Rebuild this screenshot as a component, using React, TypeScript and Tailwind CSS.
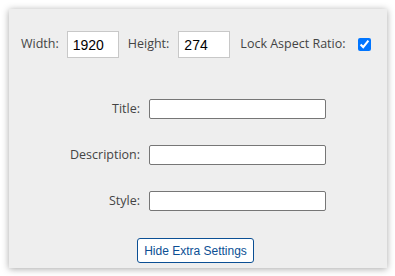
import { useState } from "react";

const labelFont = "font-['Open_Sans',_'Noto_Sans',_sans-serif]";
const inputFont = "font-['Liberation_Sans',_Arial,_sans-serif]";

function FieldRow({ label }: { label: string }) {
  return (
    <>
      <label className={`${labelFont} text-[12.5px] text-[#444] text-right leading-none`}>
        {label}
      </label>
      <input
        type="text"
        className="w-[177px] h-[20px] bg-white border border-[#767676] rounded-[2px] px-1 text-[13px] outline-none"
      />
    </>
  );
}

export default function App() {
  const [width, setWidth] = useState("1920");
  const [height, setHeight] = useState("274");
  const [locked, setLocked] = useState(true);

  return (
    <div className="w-[395px] h-[276px] bg-white pt-[9px] pl-[9px]">
      <div className="w-[378px] h-[259px] bg-[#eeeeee] shadow-[0_1px_7px_rgba(0,0,0,0.35)] flex flex-col">
        {/* Size row */}
        <div className={`${labelFont} flex items-center pt-[22px] pl-[12px] text-[12.5px] text-[#444]`}>
          <span>Width:</span>
          <input
            value={width}
            onChange={(e) => setWidth(e.target.value)}
            className={`${inputFont} ml-[8px] w-[52px] h-[27px] bg-white border border-[#c8c8c8] px-[5px] text-[14px] text-black outline-none`}
          />
          <span className="ml-[9px]">Height:</span>
          <input
            value={height}
            onChange={(e) => setHeight(e.target.value)}
            className={`${inputFont} ml-[9px] w-[52px] h-[27px] bg-white border border-[#c8c8c8] px-[5px] text-[14px] text-black outline-none`}
          />
          <span className="ml-[10px]">Lock Aspect Ratio:</span>
          <input
            type="checkbox"
            checked={locked}
            onChange={(e) => setLocked(e.target.checked)}
            className="ml-[12px] w-[13px] h-[13px] m-0 accent-[#0075ff]"
          />
        </div>

        {/* Extra settings */}
        <div className="grid grid-cols-[auto_auto] justify-center items-center gap-x-[9px] gap-y-[26px] mt-[41px]">
          <FieldRow label="Title:" />
          <FieldRow label="Description:" />
          <FieldRow label="Style:" />
        </div>

        <div className="flex justify-center mt-[27px] pr-[5px]">
          <button
            type="button"
            className={`${inputFont} h-[25px] px-[6px] bg-white border border-[#0b4f94] rounded-[3px] text-[12px] text-[#0b4f94]`}
          >
            Hide Extra Settings
          </button>
        </div>
      </div>
    </div>
  );
}
